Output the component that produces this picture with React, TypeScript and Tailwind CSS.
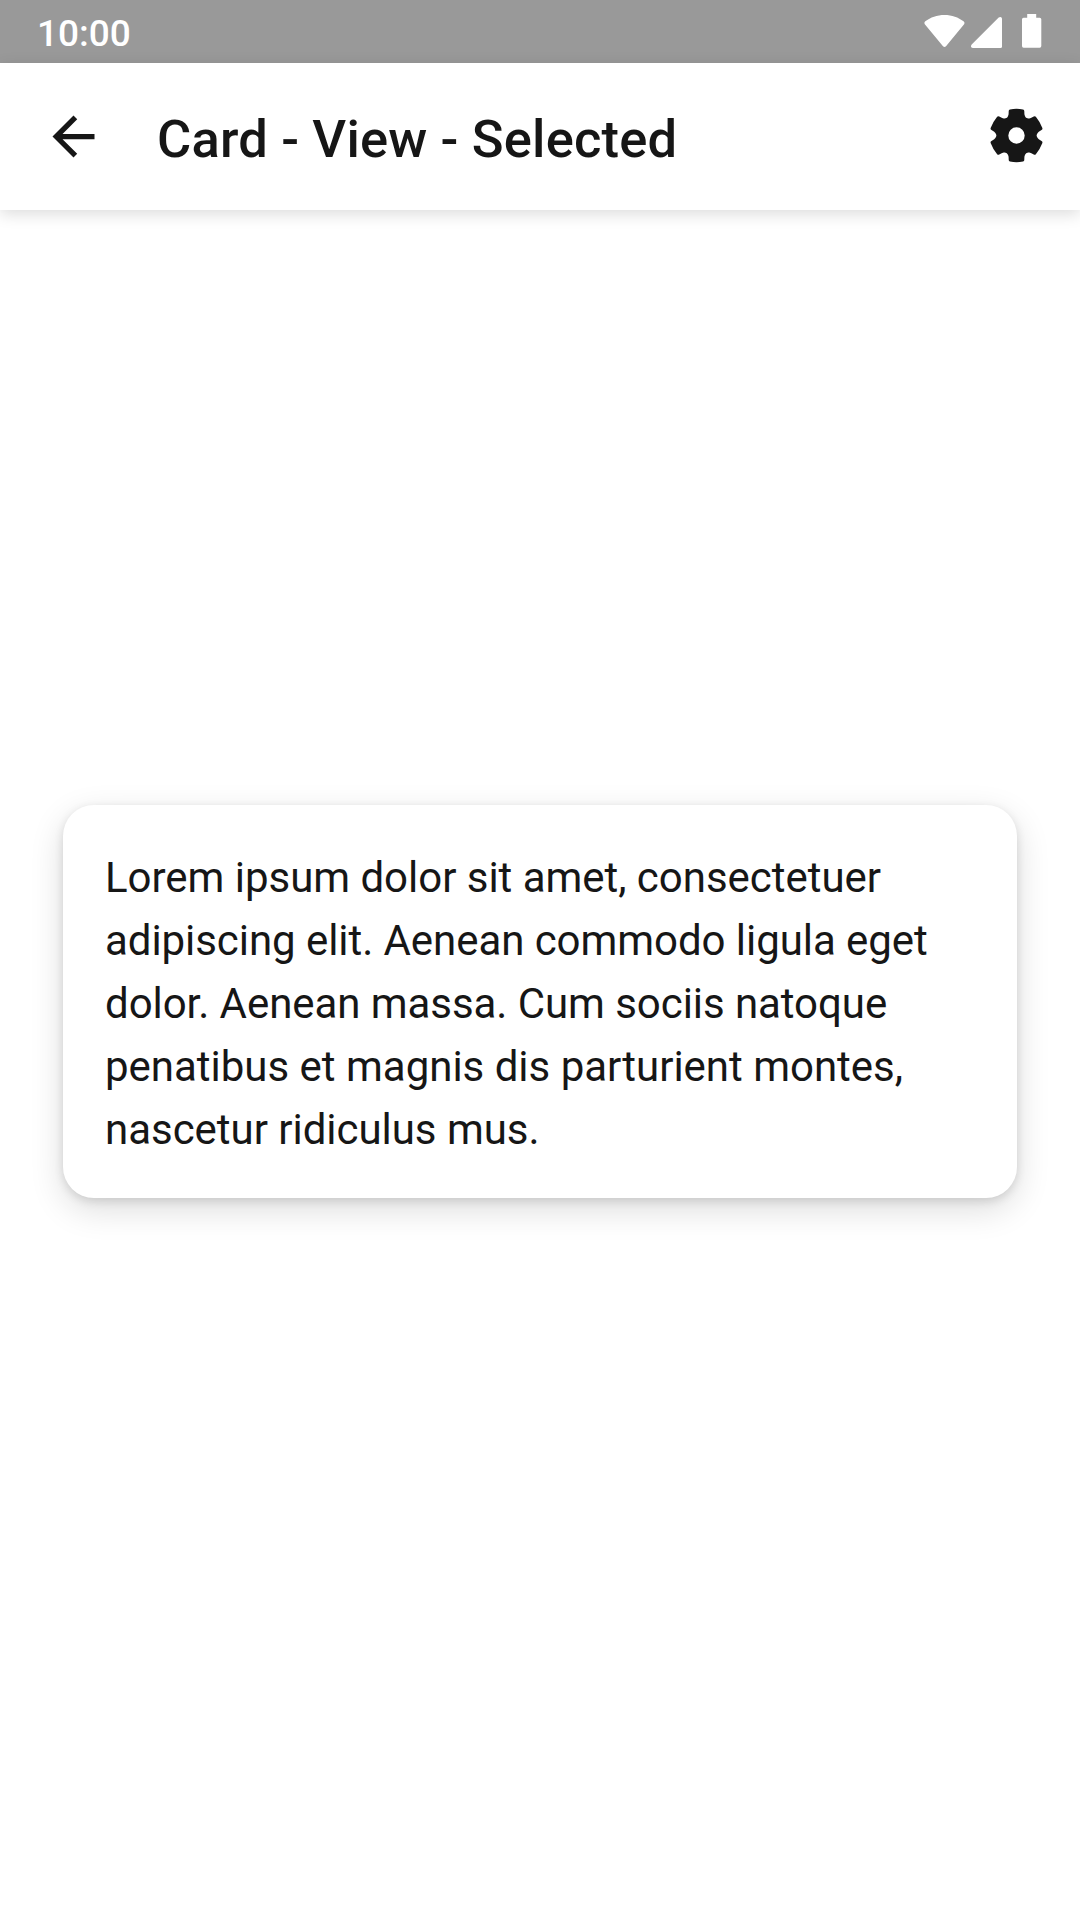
const polar = (radius: number, degrees: number) => {
  const a = (degrees * Math.PI) / 180;
  return `${(radius * Math.sin(a)).toFixed(2)} ${(-radius * Math.cos(a)).toFixed(2)}`;
};

// Six rounded teeth, the first one pointing straight up.
const gearPath =
  [0, 60, 120, 180, 240, 300]
    .map((t, i) =>
      [
        i === 0 ? `M${polar(20.1, t - 30)}` : '',
        `Q${polar(20.3, t - 26)} ${polar(21.3, t - 23.3)}`,
        `L${polar(22.6, t - 20.5)}`,
        `L${polar(25.6, t - 17.7)}`,
        `Q${polar(26.9, t - 17)} ${polar(26.9, t - 14)}`,
        `A40 40 0 0 1 ${polar(26.9, t + 14)}`,
        `Q${polar(26.9, t + 17)} ${polar(25.6, t + 17.7)}`,
        `L${polar(22.6, t + 20.5)}`,
        `L${polar(21.3, t + 23.3)}`,
        `Q${polar(20.3, t + 26)} ${polar(20.1, t + 30)}`,
      ].join(''),
    )
    .join('') + 'ZM8.200 0A8.200 8.200 0 1 0 -8.200 0A8.200 8.200 0 1 0 8.200 0Z';

export default function App() {
  return (
    <div className="flex h-[1920px] w-[1080px] flex-col overflow-hidden bg-white font-['Roboto',sans-serif] text-[#161616]">
      <div className="flex h-[63px] shrink-0 items-center justify-between bg-[#999999] pr-[38px] pl-[37px] text-white">
        <span className="pt-[4px] text-[37px] leading-[60px] font-medium">10:00</span>
        <div className="flex items-center">
          <svg className="mr-[6px]" width="41" height="63" viewBox="0 0 41 63" fill="currentColor">
            <path d="M22 46.200Q20.500 47.700 19 46.200L.8 24.200Q-.2 22.500 1.300 21.300C6.500 17.300 13 15 20.500 15S34.300 17.300 39.500 21.300Q41.100 22.500 40.100 24.200Z" />
          </svg>
          <svg className="mr-[20px]" width="31" height="63" viewBox="0 0 31 63" fill="currentColor">
            <path d="M1.800 48Q0 48 0 46.300Q0 45.300.7 44.600L27.700 17.600Q29 16.600 30.200 17.200Q31 17.700 31 18.700V46.500Q31 48 29.500 48Z" />
          </svg>
          <svg width="20" height="63" viewBox="0 0 20 63" fill="currentColor">
            <path d="M5.200 17.700V14H14.200V17.700H17.700Q19.300 17.700 19.300 19.300V46.100Q19.300 47.700 17.700 47.700H1.600Q0 47.700 0 46.100V19.300Q0 17.700 1.600 17.700Z" />
          </svg>
        </div>
      </div>
      <header className="flex h-[147px] shrink-0 items-center bg-white pr-[32px] pl-[42px] shadow-[0_4px_15px_rgba(0,0,0,0.14)]">
        <svg width="63" height="63" viewBox="0 0 24 24" fill="currentColor">
          <path d="M20 11H7.830l5.590-5.590L12 4l-8 8 8 8 1.410-1.410L7.830 13H20v-2z" />
        </svg>
        <h1 className="ml-[52px] flex-1 pt-[5px] text-[52.500px] leading-[70px] font-medium tracking-[0.17px] whitespace-nowrap">
          Card - View - Selected
        </h1>
        <svg className="mb-[2px]" width="63" height="63" viewBox="-31.500 -31.500 63 63" fill="currentColor" fillRule="evenodd">
          <path d={gearPath} />
        </svg>
      </header>
      <main className="flex flex-1 px-[63px] pt-[595px]">
        <div className="h-[393px] w-full rounded-[31px] bg-white px-[42px] pt-[41px] text-[42px] leading-[63px] shadow-[0_11px_34px_rgba(0,0,0,0.14),0_3px_10px_rgba(0,0,0,0.12)]">
          <p className="w-[880px] tracking-[-0.030px] whitespace-nowrap">
            <span className="block">Lorem ipsum dolor sit amet, consectetuer</span>
            <span className="block tracking-[-0.060px]">adipiscing elit. Aenean commodo ligula eget</span>
            <span className="block tracking-[-0.060px]">dolor. Aenean massa. Cum sociis natoque</span>
            <span className="block tracking-[-0.010px]">penatibus et magnis dis parturient montes,</span>
            <span className="block">nascetur ridiculus mus.</span>
          </p>
        </div>
      </main>
    </div>
  );
}
